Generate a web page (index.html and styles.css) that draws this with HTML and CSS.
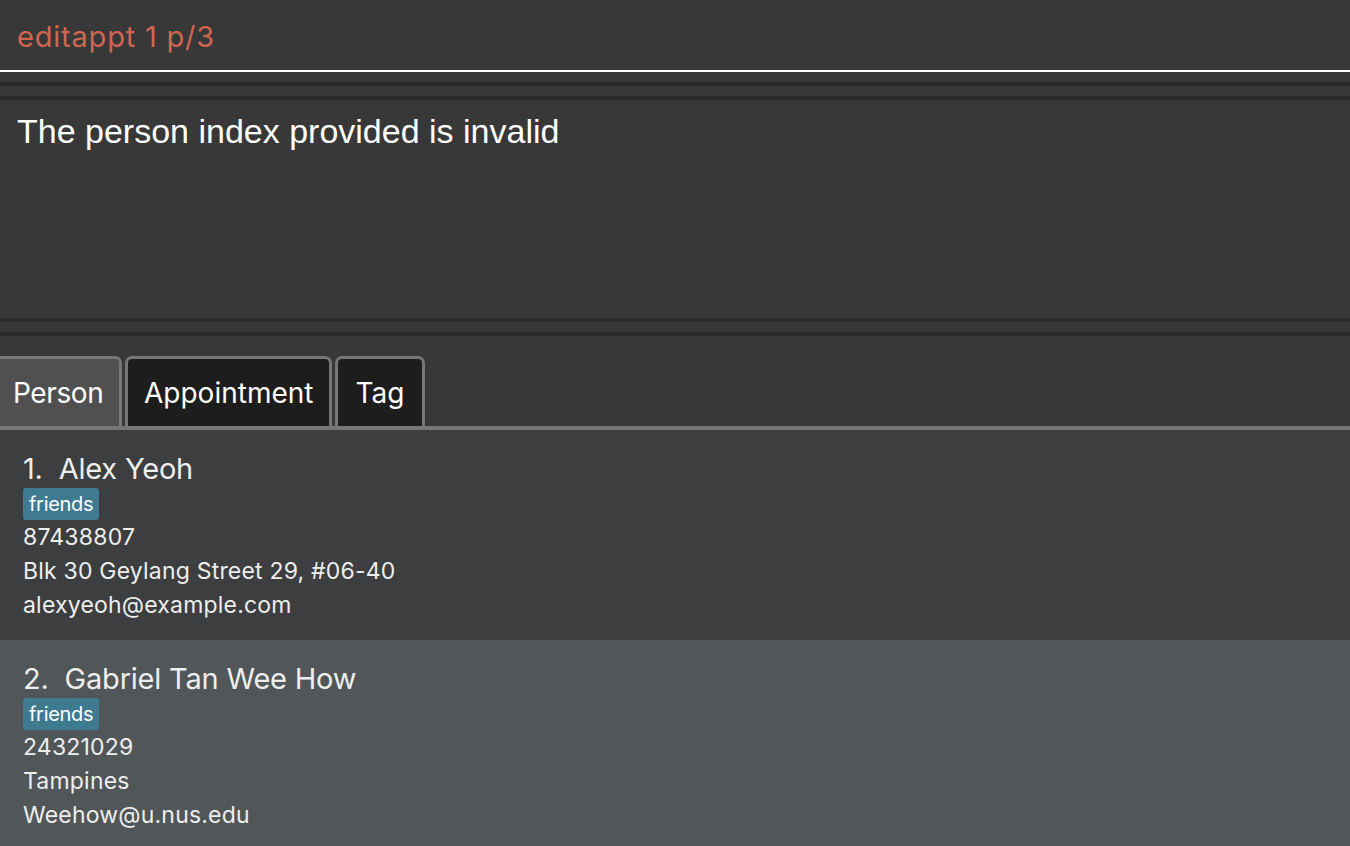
FILE: index.html
```html
<!DOCTYPE html>
<html>
<head>
<meta charset="utf-8">
<link rel="stylesheet" href="styles.css">
</head>
<body>
<div class="app">
  <div class="command">editappt 1 p/3</div>
  <div class="gap"></div>
  <div class="band"></div>
  <div class="gap"></div>
  <div class="band"></div>
  <div class="result">The person index provided is invalid</div>
  <div class="band"></div>
  <div class="gap"></div>
  <div class="band"></div>
  <div class="tabbar">
    <div class="tab selected">Person</div>
    <div class="tab">Appointment</div>
    <div class="tab tag-tab">Tag</div>
  </div>
  <div class="list">
    <div class="card even">
      <div class="name">1.&nbsp;&nbsp;Alex Yeoh</div>
      <div class="tags"><span class="tag">friends</span></div>
      <div class="line">87438807</div>
      <div class="line">Blk 30 Geylang Street 29, #06-40</div>
      <div class="line">alexyeoh@example.com</div>
    </div>
    <div class="card odd">
      <div class="name">2.&nbsp;&nbsp;Gabriel Tan Wee How</div>
      <div class="tags"><span class="tag">friends</span></div>
      <div class="line">24321029</div>
      <div class="line">Tampines</div>
      <div class="line">Weehow@u.nus.edu</div>
    </div>
  </div>
</div>
</body>
</html>
```

FILE: styles.css
```css
html, body {
  margin: 0;
  padding: 0;
  background: #383838;
  height: 846px;
  overflow: hidden;
}
.app {
  display: flex;
  flex-direction: column;
  height: 846px;
  font-family: Inter, "Liberation Sans", sans-serif;
}
.command {
  box-sizing: border-box;
  border-bottom: 2px solid #ffffff;
  height: 72px;
  padding: 17px 0 0 17px;
  color: #d06651;
  font-family: Inter, "Liberation Sans", sans-serif;
  font-size: 29px;
  line-height: 40px;
  letter-spacing: 0.8px;
}
.gap {
  height: 10px;
  background: #383838;
}
.band {
  height: 4px;
  background: #2b2b2b;
}
.result {
  height: 218px;
  box-sizing: border-box;
  padding: 11px 0 0 17px;
  color: #ffffff;
  font-family: "Liberation Sans", Arial, sans-serif;
  font-size: 34px;
  line-height: 40px;
}
.tabbar {
  height: 94px;
  box-sizing: border-box;
  padding-top: 20px;
  display: flex;
  align-items: flex-end;
  gap: 3px;
  border-bottom: 4px solid #777777;
}
.tab {
  height: 70px;
  box-sizing: border-box;
  border: 3px solid #777777;
  border-bottom: none;
  border-radius: 7px 7px 0 0;
  background: #1d1d1d;
  color: #ffffff;
  font-size: 28px;
  letter-spacing: 0;
  display: flex;
  align-items: center;
  justify-content: center;
  padding: 0 16px 0 16px;
}
.tab.tag-tab {
  padding: 0 18px 0 17px;
}
.tab.selected {
  background: #505050;
  border-left: none;
  border-radius: 0 7px 0 0;
  padding-left: 13px;
  padding-right: 15px;
  width: 122px;
  justify-content: flex-start;
  letter-spacing: -0.4px;
}
.list {
  flex: 1;
  display: flex;
  flex-direction: column;
}
.card {
  height: 210px;
  box-sizing: border-box;
  padding: 22px 0 0 23px;
  color: #eeeeee;
}
.card.even { background: #3c3e3f; }
.card.odd { background: #515658; flex: 1; }
.name {
  font-size: 29px;
  line-height: 34px;
  letter-spacing: -0.2px;
}
.tags {
  margin-top: 2px;
  height: 32px;
  display: flex;
}
.tag {
  background: #3e7b91;
  color: #ffffff;
  font-size: 20px;
  line-height: 32px;
  padding: 0 6px;
  border-radius: 3px;
  letter-spacing: -0.3px;
}
.line {
  font-size: 23px;
  line-height: 34px;
  letter-spacing: 0.2px;
}
```
